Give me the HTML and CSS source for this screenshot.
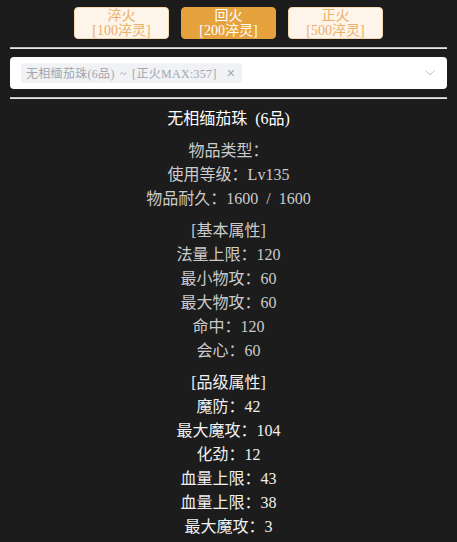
FILE: index.html
```html
<!DOCTYPE html>
<html lang="zh">
<head>
<meta charset="utf-8">
<title>淬火</title>
<link rel="stylesheet" href="styles.css">
</head>
<body>
<div class="toolbar">
  <button class="btn">淬火<br>[100淬灵]</button>
  <button class="btn active">回火<br>[200淬灵]</button>
  <button class="btn">正火<br>[500淬灵]</button>
</div>
<div class="rule"></div>
<div class="select">
  <span class="tag">无相缅茄珠(6品) ~ [正火MAX:357]<span class="close">×</span></span>
  <svg class="chev" width="10" height="6" viewBox="0 0 10 6"><path d="M0.5 0.5 L5 5 L9.5 0.5" fill="none" stroke="#c0c4cc" stroke-width="1"/></svg>
</div>
<div class="rule"></div>
<div class="info">
  <div class="title">无相缅茄珠 (6品)</div>
  <div class="group base">
    <div>物品类型：</div>
    <div>使用等级：Lv135</div>
    <div>物品耐久：1600 / 1600</div>
  </div>
  <div class="group base">
    <div>[基本属性]</div>
    <div>法量上限：120</div>
    <div>最小物攻：60</div>
    <div>最大物攻：60</div>
    <div>命中：120</div>
    <div>会心：60</div>
  </div>
  <div class="group grade">
    <div>[品级属性]</div>
    <div>魔防：42</div>
    <div>最大魔攻：104</div>
    <div>化劲：12</div>
    <div>血量上限：43</div>
    <div>血量上限：38</div>
    <div>最大魔攻：3</div>
  </div>
</div>
</body>
</html>
```

FILE: styles.css
```css
html, body {
  margin: 0;
  padding: 0;
  background: #1c1c1c;
}
body {
  font-family: "Liberation Serif", "Noto Sans CJK SC", serif;
  color: #d2d2d2;
}
.toolbar {
  display: flex;
  justify-content: center;
  gap: 12px;
  padding-top: 7px;
}
.btn {
  width: 95px;
  height: 32px;
  padding: 0;
  border: 1px solid #f5dab1;
  border-radius: 4px;
  background: #fdf4ea;
  color: #ebb06a;
  font-family: "Liberation Serif", "Noto Sans CJK SC", serif;
  font-size: 14px;
  line-height: 15px;
}
.btn.active {
  background: #e6a23c;
  border-color: #e6a23c;
  color: #fff;
}
.rule {
  margin: 8px 10px 0;
  height: 0;
  border-top: 1px solid #bdbdbd;
  border-bottom: 1px solid #e8e8e8;
}
.select {
  margin: 8px 10px 0;
  height: 32px;
  background: #fff;
  border-radius: 4px;
  display: flex;
  align-items: center;
  padding: 0 12px 0 11px;
  box-sizing: border-box;
}
.tag {
  display: flex;
  align-items: center;
  height: 20px;
  padding: 0 7px 0 5px;
  background: #f0f2f5;
  border-radius: 3px;
  color: #a3a6ad;
  font-size: 12px;
  letter-spacing: 0.3px;
  word-spacing: 2px;
  font-family: "Liberation Serif", "Noto Sans CJK SC", serif;
  white-space: nowrap;
}
.close {
  margin-left: 10px;
  font-size: 14px;
  color: #a3a6ad;
  font-family: "Liberation Sans", sans-serif;
}
.chev {
  margin-left: auto;
}
.info {
  margin-top: 8px;
  text-align: center;
  font-size: 16px;
  line-height: 24px;
  word-spacing: 4px;
}
.title {
  color: #ffffff;
}
.group {
  margin-top: 8px;
}
.base {
  color: #cbcbcb;
}
.grade {
  color: #f0f0f0;
}
```
